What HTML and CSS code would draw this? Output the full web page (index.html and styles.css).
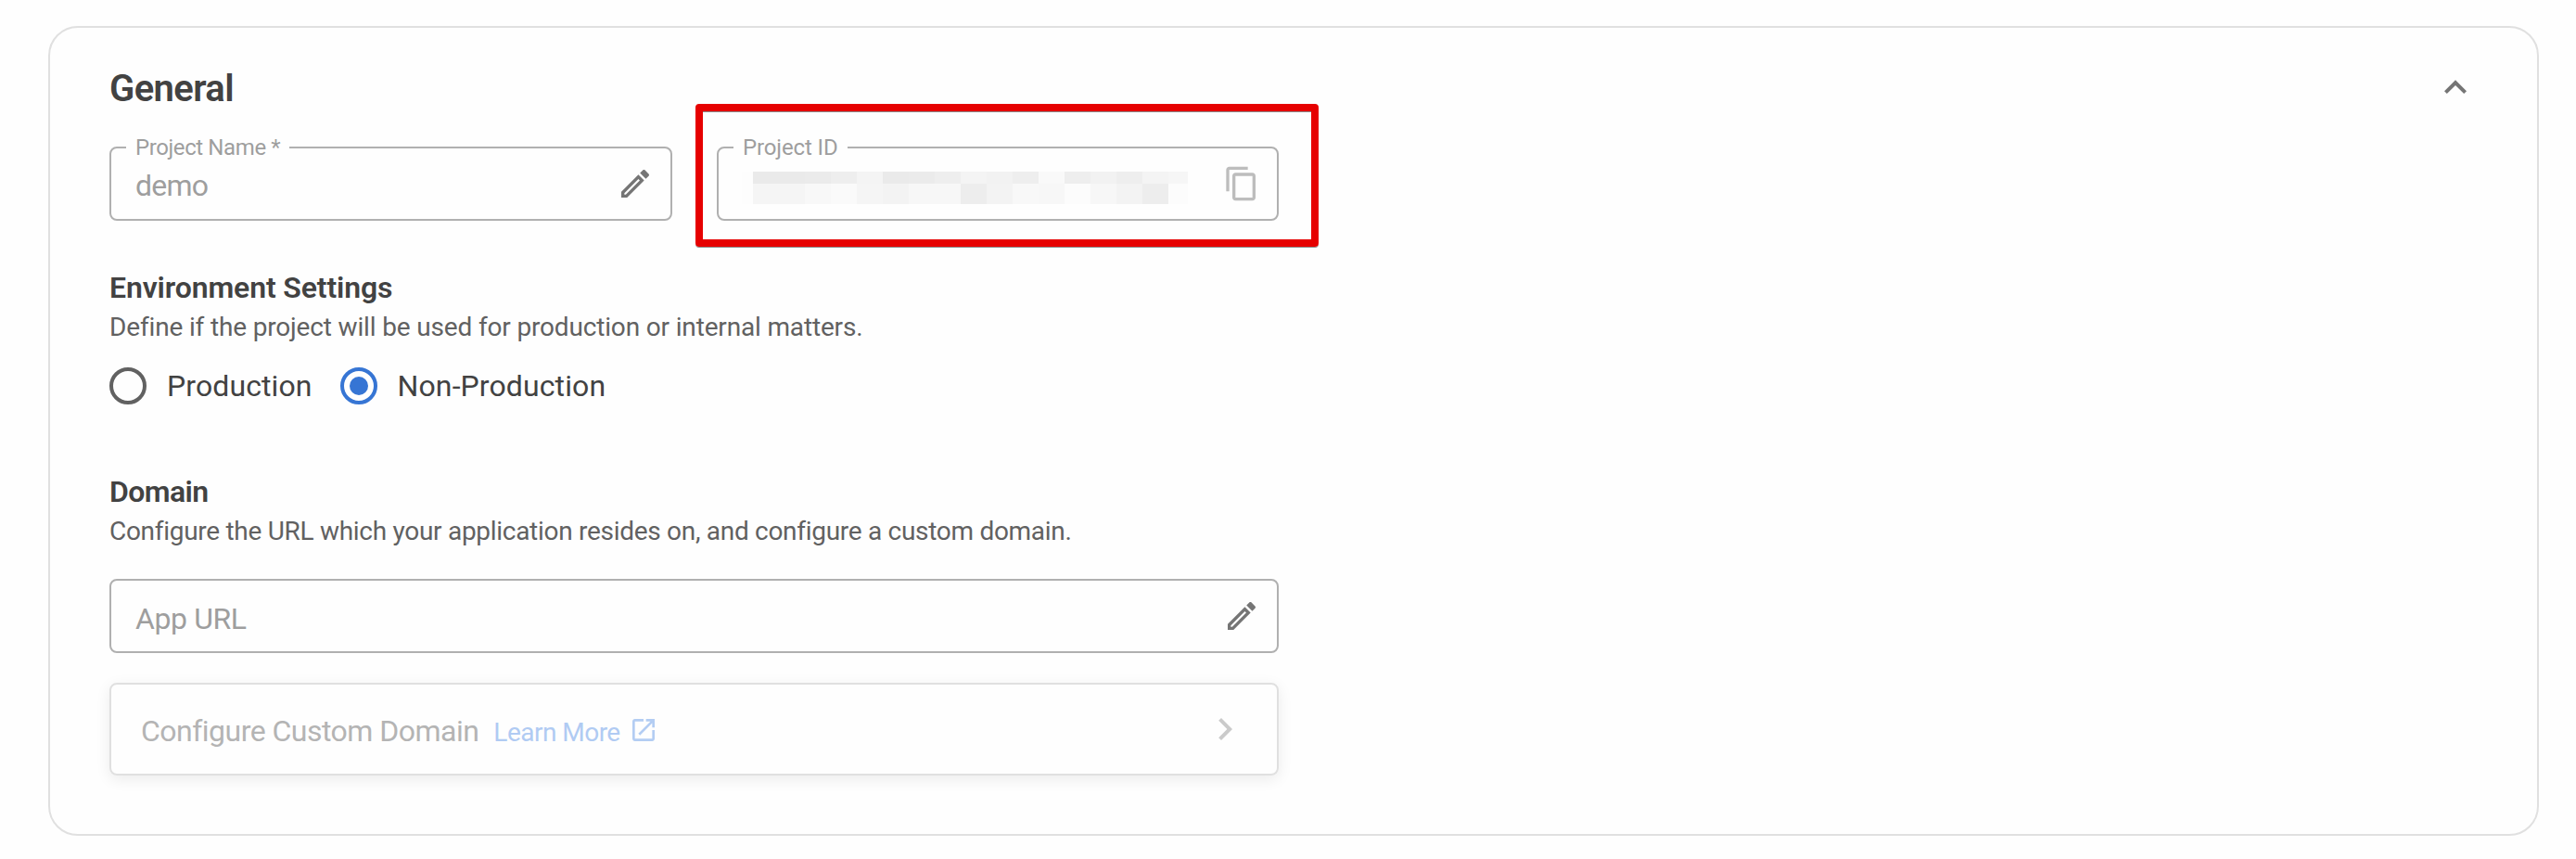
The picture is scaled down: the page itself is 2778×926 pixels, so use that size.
FILE: index.html
```
<!DOCTYPE html>
<html lang="en">
<head>
<meta charset="utf-8">
<title>Project settings</title>
<link rel="stylesheet" href="styles.css">
</head>
<body>
<main class="card">
  <header class="card-header">
    <h1 class="card-title">General</h1>
    <svg class="icon collapse" viewBox="0 0 24 24"><path d="M7.41 15.41 12 10.83l4.59 4.58L18 14l-6-6-6 6z" transform="translate(0 -.35)"/></svg>
  </header>
  <div class="content">
    <div class="field-row">
      <div class="field">
        <span class="field-label name-label">Project Name *</span>
        <span class="field-value">demo</span>
        <svg class="icon edit" viewBox="0 0 24 24"><path d="m14.06 9.02.92.92L5.92 19H5v-.92l9.06-9.06M17.66 3c-.25 0-.51.1-.7.29l-1.83 1.83 3.75 3.75 1.83-1.83c.39-.39.39-1.02 0-1.41l-2.34-2.34c-.2-.2-.45-.29-.71-.29zm-3.6 3.19L3 17.25V21h3.75L17.81 9.94l-3.75-3.75z"/></svg>
      </div>
      <div class="field">
        <span class="field-label">Project ID</span>
        <svg class="redacted" viewBox="0 0 481 35" shape-rendering="crispEdges">
          <path fill="#fdfdfd" d="M0 0h12v35H0z"/>
          <path fill="#eaeaea" d="M12 0h56v13H12zM152 0h28v13h-28z"/>
          <path fill="#ebebeb" d="M68 0h28v13H68zM180 0h28v13h-28z"/>
          <path fill="#eeeeee" d="M96 0h28v13H96zM208 0h28v13h-28zM292 0h28v13h-28zM348 0h28v13h-28zM404 0h28v13h-28z"/>
          <path fill="#f4f4f4" d="M124 0h28v13h-28zM236 0h28v13h-28zM432 0h28v13h-28z"/>
          <path fill="#f2f2f2" d="M264 0h28v13h-28zM376 0h28v13h-28z"/>
          <path fill="#f9f9f9" d="M320 0h28v13h-28z"/>
          <path fill="#f6f6f6" d="M460 0h21v13h-21z"/>
          <path fill="#f5f5f5" d="M12 13h56v22H12zM124 13h28v22h-28z"/>
          <path fill="#f8f8f8" d="M68 13h28v22H68zM292 13h28v22h-28z"/>
          <path fill="#fafafa" d="M96 13h28v22H96z"/>
          <path fill="#f3f3f3" d="M152 13h28v22h-28zM264 13h28v22h-28zM404 13h28v22h-28z"/>
          <path fill="#f7f7f7" d="M180 13h56v22h-56zM320 13h28v22h-28zM376 13h28v22h-28z"/>
          <path fill="#ededed" d="M236 13h28v22h-28zM432 13h28v22h-28z"/>
          <path fill="#fcfcfc" d="M348 13h28v22h-28zM460 13h21v22h-21z"/>
        </svg>
        <svg class="icon copy" viewBox="0 0 24 24"><path d="M16 1H4c-1.100 0-2 .9-2 2v14h2V3h12V1zm3 4H8c-1.100 0-2 .9-2 2v14c0 1.100.9 2 2 2h11c1.100 0 2-.9 2-2V7c0-1.100-.9-2-2-2zm0 16H8V7h11v14z"/></svg>
        <div class="highlight"></div>
      </div>
    </div>

    <section class="section">
      <h2 class="section-title env-title">Environment Settings</h2>
      <p class="section-text env-text">Define if the project will be used for production or internal matters.</p>
      <div class="radios">
        <label class="radio"><span class="radio-dot"></span><span class="radio-label">Production</span></label>
        <label class="radio"><span class="radio-dot checked"></span><span class="radio-label">Non-Production</span></label>
      </div>
    </section>

    <section class="section domain">
      <h2 class="section-title domain-title">Domain</h2>
      <p class="section-text domain-text">Configure the URL which your application resides on, and configure a custom domain.</p>
      <div class="field url-field">
        <span class="field-value">App URL</span>
        <svg class="icon edit" viewBox="0 0 24 24"><path d="m14.06 9.02.92.92L5.92 19H5v-.92l9.06-9.06M17.66 3c-.25 0-.51.1-.7.29l-1.83 1.83 3.75 3.75 1.83-1.83c.39-.39.39-1.02 0-1.41l-2.34-2.34c-.2-.2-.45-.29-.71-.29zm-3.6 3.19L3 17.25V21h3.75L17.81 9.94l-3.75-3.75z"/></svg>
      </div>
      <div class="panel">
        <div class="panel-text">
          <span class="panel-title">Configure Custom Domain</span>
          <a class="panel-link">Learn More</a>
        </div>
        <svg class="icon external" viewBox="0 0 24 24"><path d="M19 19H5V5h7V3H5c-1.110 0-2 .9-2 2v14c0 1.100.89 2 2 2h14c1.100 0 2-.9 2-2v-7h-2v7zM14 3v2h3.590l-9.830 9.830 1.410 1.410L19 6.410V10h2V3h-7z"/></svg>
        <svg class="icon next" viewBox="0 0 24 24"><path d="M10 6 8.590 7.410 13.170 12l-4.580 4.590L10 18l6-6z"/></svg>
      </div>
    </section>
  </div>
</main>
</body>
</html>
```
FILE: styles.css
```
* { box-sizing: border-box; }

body {
  margin: 0;
  padding: 28px 40px 25px 52px;
  background: #fefefe;
  color: #424242;
  font-family: Roboto, "Liberation Sans", sans-serif;
}

h1, h2, p { margin: 0; }

.card {
  height: 873px;
  padding: 41px 64px 0;
  border: 2px solid #e0e0e0;
  border-radius: 32px;
}

.card-header {
  display: flex;
  justify-content: space-between;
  height: 48px;
}

.card-title {
  padding-top: 1px;
  font-size: 40px;
  font-weight: 600;
  line-height: 48px;
  letter-spacing: -0.6px;
}

.icon {
  display: block;
  flex: none;
  width: 40px;
  height: 40px;
  fill: #757575;
}

.collapse {
  width: 48px;
  height: 48px;
}

.content { width: 1261px; }

.field-row {
  display: grid;
  grid-template-columns: 607px 606px;
  gap: 48px;
  margin-top: 39px;
}

.field {
  position: relative;
  display: flex;
  align-items: center;
  height: 80px;
  padding: 0 18px 0 26px;
  border: 2px solid #b0b0b0;
  border-radius: 8px;
  color: #9e9e9e;
}

.field-label {
  position: absolute;
  top: -13px;
  left: 16px;
  padding: 0 10px;
  background: #fefefe;
  font-size: 24px;
  line-height: 24px;
  letter-spacing: -0.12px;
  white-space: nowrap;
}

.name-label { letter-spacing: -0.4px; }

.field-value {
  flex: 1;
  padding-top: 3px;
  font-size: 32px;
  line-height: 40px;
  letter-spacing: -0.75px;
}

.redacted {
  width: 481px;
  height: 35px;
  margin-top: 9px;
  margin-left: -1px;
  display: block;
}

.copy {
  margin-left: auto;
  fill: #bdbdbd;
}

.highlight {
  position: absolute;
  top: -48px;
  left: -25px;
  width: 672px;
  height: 154px;
  border: 8px solid #e60000;
  border-radius: 4px;
  box-shadow: 0 1px 0 #8a8a8a, inset 0 1px 0 #8a8a8a;
}

.section { margin-top: 52px; }

.section-title {
  font-size: 32px;
  font-weight: 600;
  line-height: 40px;
}

.section-text {
  margin-top: 3px;
  color: #616161;
  font-size: 28px;
  line-height: 40px;
  white-space: nowrap;
}

.env-title { letter-spacing: -0.13px; }
.env-text { letter-spacing: -0.16px; }
.domain-title { letter-spacing: -0.6px; }
.domain-text { letter-spacing: -0.29px; }

.radios {
  display: flex;
  gap: 30px;
  margin-top: 22px;
}

.radio {
  display: flex;
  align-items: center;
  gap: 22px;
  font-size: 32px;
  line-height: 40px;
  letter-spacing: 0.1px;
}

.radio-label { padding-top: 1px; }

.radio-dot {
  display: grid;
  place-items: center;
  width: 40px;
  height: 40px;
  border: 4px solid #616161;
  border-radius: 50%;
}

.radio-dot.checked { border-color: #3675d4; }

.radio-dot.checked::after {
  content: "";
  width: 20px;
  height: 20px;
  border-radius: 50%;
  background: #3675d4;
}

.domain { margin-top: 74px; }

.url-field { margin-top: 31px; }

.url-field .field-value {
  padding-top: 5px;
  letter-spacing: -0.4px;
}

.panel {
  display: flex;
  align-items: center;
  height: 100px;
  margin-top: 32px;
  padding: 0 32px;
  border: 2px solid #e0e0e0;
  border-radius: 8px;
  box-shadow: 0 4px 16px rgba(0, 0, 0, 0.08);
}

.panel-text {
  display: flex;
  align-items: baseline;
  gap: 16px;
  padding-top: 5px;
  line-height: 40px;
}

.panel-title {
  color: #b4b4b4;
  font-size: 32px;
  letter-spacing: -0.52px;
}

.panel-link {
  color: #b0cbf3;
  font-size: 28px;
  letter-spacing: -0.52px;
}

.external {
  width: 32px;
  height: 32px;
  margin-left: 9px;
  margin-top: 2px;
  fill: #b3cdf3;
}

.next {
  width: 48px;
  height: 48px;
  margin-left: auto;
  fill: #cacaca;
}
```
